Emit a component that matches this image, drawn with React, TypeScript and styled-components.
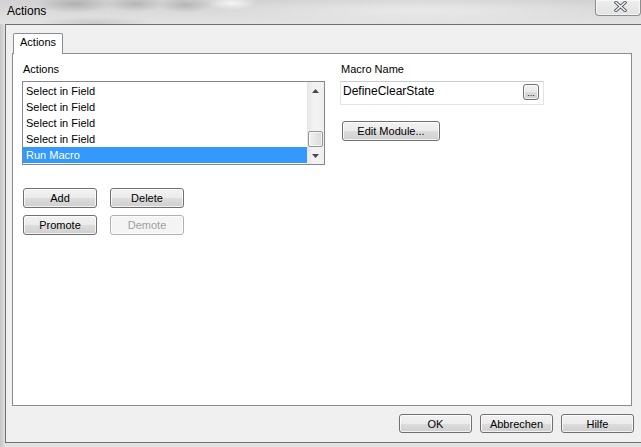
import React from "react";
import styled, { createGlobalStyle } from "styled-components";

const GlobalStyle = createGlobalStyle`
  html, body { margin: 0; padding: 0; }
  body {
    width: 641px;
    height: 447px;
    overflow: hidden;
    font-family: "Liberation Sans", Arial, sans-serif;
    color: #000;
  }
  * { box-sizing: border-box; }
`;

const Window = styled.div`
  width: 641px;
  height: 447px;
  display: flex;
  flex-direction: column;
  background: #d9d9d9;
`;

const TitleBar = styled.div`
  height: 24px;
  display: flex;
  align-items: flex-start;
  background:
    radial-gradient(ellipse 40px 9px at 75px 4px, rgba(110, 110, 110, 0.35), transparent),
    radial-gradient(ellipse 30px 8px at 135px 4px, rgba(110, 110, 110, 0.3), transparent),
    radial-gradient(ellipse 28px 8px at 185px 5px, rgba(110, 110, 110, 0.3), transparent),
    radial-gradient(ellipse 25px 7px at 232px 3px, rgba(255, 255, 255, 0.8), transparent),
    radial-gradient(ellipse 60px 6px at 95px 23px, rgba(130, 130, 130, 0.25), transparent),
    radial-gradient(ellipse 200px 14px at 420px 10px, rgba(240, 240, 240, 0.7), transparent),
    linear-gradient(#d2d2d2, #e3e3e3);
`;

const Title = styled.div`
  font-size: 12px;
  line-height: 16px;
  padding: 3px 0 0 7px;
`;

const CloseButton = styled.div`
  margin-left: auto;
  width: 46px;
  height: 16px;
  border: 1px solid #8d8d8d;
  border-top: none;
  border-radius: 0 0 4px 4px;
  background: linear-gradient(#eeeeee, #e2e2e2);
  box-shadow: inset 0 0 0 1px rgba(255, 255, 255, 0.6);
  display: flex;
  justify-content: center;
  padding: 1px 0 0 4px;
`;

const Frame = styled.div`
  flex: 1;
  display: flex;
  padding: 0 0 4px 5px;
  background: linear-gradient(to right, #c6c6c6, #d4d4d4 3px, #e2e2e2 5px);
`;

const Client = styled.div`
  flex: 1;
  display: flex;
  flex-direction: column;
  background: #f0f0f0;
  border-left: 1px solid #6f6f6f;
  border-top: 1px solid #6f6f6f;
  border-bottom: 1px solid #6f6f6f;
  padding: 8px 9px 0 6px;
`;

const TabStrip = styled.div`
  display: flex;
  height: 20px;
  position: relative;
  z-index: 1;
`;

const Tab = styled.div`
  margin-left: 1px;
  width: 50px;
  height: 21px;
  background: #ffffff;
  border: 1px solid #898c95;
  border-bottom: none;
  border-radius: 2px 2px 0 0;
  font-size: 11px;
  line-height: 17px;
  padding-left: 6px;
`;

const Panel = styled.div`
  height: 353px;
  background: #ffffff;
  border: 1px solid #898c95;
  display: grid;
  grid-template-columns: 303px 1fr;
  column-gap: 15px;
  align-items: start;
  padding: 8px 0 0 9px;
`;

const Column = styled.div`
  display: flex;
  flex-direction: column;
  align-items: flex-start;
`;

const Label = styled.div<{ $indent?: number }>`
  font-size: 11px;
  line-height: 14px;
  height: 14px;
  padding-left: ${(p) => p.$indent ?? 1}px;
`;

const ListBox = styled.div`
  margin-top: 5px;
  width: 303px;
  height: 84px;
  border: 1px solid #828790;
  background: #fff;
  display: flex;
`;

const Items = styled.div`
  flex: 1;
  padding-top: 1px;
  display: flex;
  flex-direction: column;
`;

const Item = styled.div<{ $selected?: boolean }>`
  height: 16px;
  line-height: 16px;
  font-size: 11px;
  padding-left: 3px;
  background: ${(p) => (p.$selected ? "#3399ff" : "transparent")};
  color: ${(p) => (p.$selected ? "#ffffff" : "#000000")};
`;

const ScrollBar = styled.div`
  width: 17px;
  display: flex;
  flex-direction: column;
  background: linear-gradient(to right, #e6e6e6, #f3f3f3 40%, #f0f0f0);
`;

const ArrowButton = styled.div`
  height: 17px;
  display: flex;
  align-items: center;
  justify-content: center;
`;

const Track = styled.div`
  flex: 1;
  display: flex;
  flex-direction: column;
  justify-content: flex-end;
  padding: 0 1px;
`;

const Thumb = styled.div`
  height: 16px;
  border: 1px solid #959595;
  border-radius: 2px;
  background: linear-gradient(to right, #f2f2f2, #e6e6e6 50%, #d8d8d8);
  box-shadow: inset 0 0 0 1px rgba(255, 255, 255, 0.7);
`;

const ButtonGrid = styled.div`
  margin: 23px 0 0 1px;
  display: grid;
  grid-template-columns: 74px 74px;
  column-gap: 13px;
  row-gap: 7px;
`;

const Button = styled.button<{ $w?: number; $h?: number; $disabled?: boolean }>`
  width: ${(p) => p.$w ?? 74}px;
  height: ${(p) => p.$h ?? 20}px;
  margin: 0;
  padding: 0;
  font-family: "Liberation Sans", Arial, sans-serif;
  font-size: 11px;
  border-radius: 3px;
  border: 1px solid ${(p) => (p.$disabled ? "#adb2b5" : "#707070")};
  color: ${(p) => (p.$disabled ? "#a0a0a0" : "#000000")};
  background: ${(p) =>
    p.$disabled
      ? "#f4f4f4"
      : "linear-gradient(#f2f2f2 0%, #ebebeb 50%, #dddddd 50%, #cfcfcf 100%)"};
  box-shadow: inset 0 0 0 1px rgba(255, 255, 255, 0.75);
  display: flex;
  align-items: center;
  justify-content: center;
`;

const TextBox = styled.div`
  margin-top: 5px;
  width: 204px;
  height: 24px;
  border: 1px solid #e2e3ea;
  border-top-color: #c9ccd3;
  background: #fff;
  display: flex;
  align-items: flex-start;
  padding: 0 4px 0 2px;
`;

const TextValue = styled.div`
  flex: 1;
  font-size: 12px;
  line-height: 18px;
`;

const DotsButton = styled.div`
  margin-top: 2px;
  width: 16px;
  height: 16px;
  border: 1px solid #707070;
  border-radius: 3px;
  background: linear-gradient(#f2f2f2 0%, #ebebeb 50%, #dddddd 50%, #cfcfcf 100%);
  box-shadow: inset 0 0 0 1px rgba(255, 255, 255, 0.75);
  font-size: 9px;
  line-height: 16px;
  text-align: center;
`;

const EditWrap = styled.div`
  margin: 16px 0 0 2px;
`;

const Footer = styled.div`
  margin: 8px -2px 0 0;
  display: flex;
  justify-content: flex-end;
  gap: 8px;
`;

const Up = () => (
  <svg width="7" height="4" viewBox="0 0 7 4">
    <path d="M0 4 L3.5 0 L7 4 Z" fill="#4a4a4a" />
  </svg>
);

const Down = () => (
  <svg width="7" height="4" viewBox="0 0 7 4">
    <path d="M0 0 L7 0 L3.5 4 Z" fill="#4a4a4a" />
  </svg>
);

const CloseX = () => (
  <svg width="13" height="11" viewBox="0 0 13 11">
    <path d="M2 1.5 L11 9.5 M11 1.5 L2 9.5" stroke="#5d6470" strokeWidth="3.4" strokeLinecap="square" />
    <path d="M2 1.5 L11 9.5 M11 1.5 L2 9.5" stroke="#f6f6f6" strokeWidth="1.4" strokeLinecap="square" />
  </svg>
);

const items = ["Select in Field", "Select in Field", "Select in Field", "Select in Field", "Run Macro"];

export default function App() {
  return (
    <>
      <GlobalStyle />
      <Window>
        <TitleBar>
          <Title>Actions</Title>
          <CloseButton>
            <CloseX />
          </CloseButton>
        </TitleBar>
        <Frame>
          <Client>
            <TabStrip>
              <Tab>Actions</Tab>
            </TabStrip>
            <Panel>
              <Column>
                <Label>Actions</Label>
                <ListBox>
                  <Items>
                    {items.map((t, i) => (
                      <Item key={i} $selected={i === items.length - 1}>
                        {t}
                      </Item>
                    ))}
                  </Items>
                  <ScrollBar>
                    <ArrowButton>
                      <Up />
                    </ArrowButton>
                    <Track>
                      <Thumb />
                    </Track>
                    <ArrowButton>
                      <Down />
                    </ArrowButton>
                  </ScrollBar>
                </ListBox>
                <ButtonGrid>
                  <Button>Add</Button>
                  <Button>Delete</Button>
                  <Button>Promote</Button>
                  <Button $disabled>Demote</Button>
                </ButtonGrid>
              </Column>
              <Column>
                <Label>Macro Name</Label>
                <TextBox>
                  <TextValue>DefineClearState</TextValue>
                  <DotsButton>...</DotsButton>
                </TextBox>
                <EditWrap>
                  <Button $w={98}>Edit Module...</Button>
                </EditWrap>
              </Column>
            </Panel>
            <Footer>
              <Button $w={73} $h={19}>OK</Button>
              <Button $w={73} $h={19}>Abbrechen</Button>
              <Button $w={73} $h={19}>Hilfe</Button>
            </Footer>
          </Client>
        </Frame>
      </Window>
    </>
  );
}
